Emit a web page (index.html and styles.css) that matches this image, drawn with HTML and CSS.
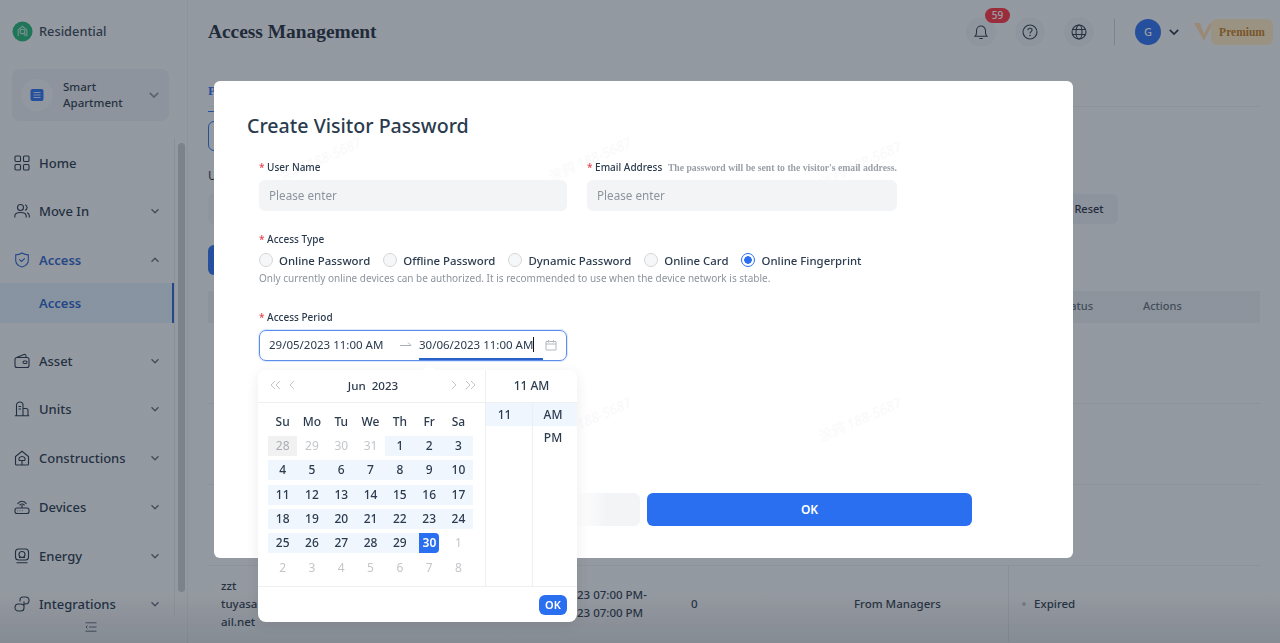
FILE: index.html
```html
<!DOCTYPE html>
<html lang="en">
<head>
    <meta charset="UTF-8">
    <title>Access Management</title>
    <link rel="stylesheet" href="styles.css">
</head>
<body>
    <svg class="sprite" aria-hidden="true">
        <symbol id="chev" viewBox="0 0 10 10"><path d="M1.5 3.2 5 6.8l3.5-3.6" fill="none" stroke="currentColor" stroke-width="1.3"/></symbol>
    </svg>

    <div class="app">
        <aside class="sidebar">
            <div class="brand">
                <svg class="brand-logo" viewBox="0 0 22 22">
                    <circle cx="11" cy="11" r="10.5" fill="#1fb573"/>
                    <path d="M6.5 16V9.5L11 5.5l4.500 4V16" fill="none" stroke="#bfe6d4" stroke-width="1.200"/>
                    <circle cx="11" cy="11" r="2.400" fill="none" stroke="#bfe6d4" stroke-width="1.200"/>
                    <path d="M11 13.400h2.600V16" fill="none" stroke="#bfe6d4" stroke-width="1.200"/>
                </svg>
                <span>Residential</span>
            </div>
            <div class="project">
                <div class="project-icon">
                    <svg viewBox="0 0 14 14" width="14" height="14">
                        <rect x="0.500" y="1" width="13" height="12" rx="2" fill="#2a6ff0"/>
                        <path d="M3.500 4.500h7M3.500 7h7M3.500 9.500h7" stroke="#cfe0fb" stroke-width="1"/>
                    </svg>
                </div>
                <div class="project-name">Smart<br>Apartment</div>
                <svg class="chev"><use href="#chev"/></svg>
            </div>

            <div class="side-scroll">
                <nav class="menu">
                    <a class="menu-item">
                        <svg class="menu-icon" viewBox="0 0 16 16"><rect x="1" y="1" width="5.500" height="5.500" rx="1"/><rect x="9.500" y="1" width="5.500" height="5.500" rx="1"/><rect x="1" y="9.500" width="5.500" height="5.500" rx="1"/><rect x="9.500" y="9.500" width="5.500" height="5.500" rx="1"/></svg>
                        Home
                    </a>
                    <a class="menu-item">
                        <svg class="menu-icon" viewBox="0 0 16 16"><circle cx="6.500" cy="4.500" r="3"/><path d="M.8 14.500v-1.500c0-2.200 2-3.500 5.700-3.500s5.700 1.300 5.700 3.500v1.500M11 1.700c1.400.4 2.100 1.500 2.100 2.800S12.400 6.900 11 7.300M13 9.800c1.500.5 2.300 1.600 2.300 3v1.700"/></svg>
                        Move In
                        <svg class="chev"><use href="#chev"/></svg>
                    </a>
                    <a class="menu-item active">
                        <svg class="menu-icon" viewBox="0 0 16 16"><path d="M8 1c2 1.200 4 1.800 6.300 1.900v5.300c0 3.300-2.600 5.700-6.300 6.800-3.700-1.100-6.300-3.500-6.300-6.800V2.900C4 2.800 6 2.200 8 1z"/><path d="M5.300 7.300 7.500 9.500l3.300-3.200"/></svg>
                        Access
                        <svg class="chev chev-up"><use href="#chev"/></svg>
                    </a>
                    <a class="menu-sub">Access</a>
                    <a class="menu-item">
                        <svg class="menu-icon" viewBox="0 0 16 16"><rect x="1" y="4.500" width="14" height="10" rx="2"/><path d="M2.500 4.500 10 1.500c1-.3 2 .2 2 1.500v1.500"/><rect x="9" y="8" width="4" height="2.500" rx="1.200"/></svg>
                        Asset
                        <svg class="chev"><use href="#chev"/></svg>
                    </a>
                    <a class="menu-item">
                        <svg class="menu-icon" viewBox="0 0 16 16"><path d="M2.500 14.500V4c0-1.800 1.500-3 3.300-3s3.200 1.200 3.200 3v10.500M9 7.500h3c1.200 0 2 .8 2 2v5M.8 14.800h14.400M4.500 5.500h2.600M4.500 8h2.600"/></svg>
                        Units
                        <svg class="chev"><use href="#chev"/></svg>
                    </a>
                    <a class="menu-item">
                        <svg class="menu-icon" viewBox="0 0 16 16"><path d="M1.500 14V6.500L8 1.300l6.500 5.200V14c0 .6-.4 1-1 1h-11c-.6 0-1-.4-1-1z"/><path d="M8 15v-4.500M5.300 10.500c-1.200-1.800.3-4 2.700-4s3.900 2.200 2.700 4z"/></svg>
                        Constructions
                        <svg class="chev"><use href="#chev"/></svg>
                    </a>
                    <a class="menu-item">
                        <svg class="menu-icon" viewBox="0 0 16 16"><rect x="1" y="9" width="14" height="5.500" rx="2"/><path d="M8 9V6M3.500 5C5.800 1.300 10.200 1.300 12.500 5M5.500 6.300C6.800 4.600 9.200 4.600 10.500 6.300M3.500 11.800h.6M5.700 11.800h.6M7.900 11.800h.6"/></svg>
                        Devices
                        <svg class="chev"><use href="#chev"/></svg>
                    </a>
                    <a class="menu-item">
                        <svg class="menu-icon" viewBox="0 0 16 16"><rect x="1.500" y="1" width="13" height="11" rx="3"/><circle cx="8" cy="6.500" r="3"/><path d="M5 9.500h6M2.500 14.700h11"/></svg>
                        Energy
                        <svg class="chev"><use href="#chev"/></svg>
                    </a>
                    <a class="menu-item">
                        <svg class="menu-icon" viewBox="0 0 16 16"><path d="M6 5.500V4c0-1.700 1.300-3 3-3h2.500C13.400 1 15 2.400 15 4.300c0 1.900-1.300 3.700-3.500 3.700H10"/><path d="M10 10.500V12c0 1.700-1.300 3-3 3H4.500C2.600 15 1 13.600 1 11.700 1 9.800 2.300 8 4.500 8H6c2 0 4 .2 4 2.500V5.500"/></svg>
                        Integrations
                        <svg class="chev"><use href="#chev"/></svg>
                    </a>
                </nav>
                <div class="side-track"><div class="side-thumb"></div></div>
            </div>

            <div class="side-foot">
                <svg viewBox="0 0 12 10" width="12" height="10"><path d="M.5 .8h11M4 5h7.500M.5 9.200h11M2.500 3.500 1 5l1.500 1.500" fill="none" stroke="#5f6977" stroke-width="1"/></svg>
            </div>
        </aside>

        <main class="main">
            <header class="topbar">
                <h1>Access Management</h1>
                <div class="top-actions">
                    <div class="round-btn">
                        <svg viewBox="0 0 16 16" width="16" height="16"><path d="M2 12.300h12c-1-1-1.500-2-1.500-3.500V6.500a4.500 4.500 0 0 0-9 0v2.300c0 1.500-.5 2.500-1.500 3.500zM6.300 14.500h3.400" fill="none" stroke="#2d3a4b" stroke-width="1.100"/></svg>
                        <span class="badge">59</span>
                    </div>
                    <div class="round-btn">
                        <svg viewBox="0 0 16 16" width="16" height="16"><circle cx="8" cy="8" r="7" fill="none" stroke="#2d3a4b" stroke-width="1.100"/><path d="M5.900 6.200c0-1.200 1-2 2.100-2s2.100.8 2.100 1.900c0 1.500-2.100 1.700-2.100 3.400" fill="none" stroke="#2d3a4b" stroke-width="1.100"/><circle cx="8" cy="11.500" r=".8" fill="#2d3a4b"/></svg>
                    </div>
                    <div class="round-btn">
                        <svg viewBox="0 0 16 16" width="16" height="16"><g fill="none" stroke="#2d3a4b" stroke-width="1.100"><circle cx="8" cy="8" r="7"/><ellipse cx="8" cy="8" rx="3" ry="7"/><path d="M1.500 5.500h13M1.500 10.500h13"/></g></svg>
                    </div>
                    <div class="top-divider"></div>
                    <div class="avatar">G</div>
                    <svg class="chev chev-dark"><use href="#chev"/></svg>
                    <div class="premium">
                        <svg class="premium-v" viewBox="0 0 20 20" width="20" height="20"><path d="M0 1h6l4 11 3-6 3-5h3L10 19z" fill="#ffd9a8"/></svg>
                        <span class="premium-tag">Premium</span>
                    </div>
                </div>
            </header>

            <div class="content">
                <div class="tabs"><span class="tab">Password</span></div>
                <div class="toolbar"><span class="outline-btn"></span></div>
                <div class="filters">
                    <div class="filter">
                        <label>User</label>
                        <div class="filter-input"></div>
                    </div>
                    <div class="reset-btn">Reset</div>
                </div>
                <div class="primary-btn"></div>
                <div class="table">
                    <div class="table-head">
                        <span class="th-status">Status</span>
                        <span class="th-actions">Actions</span>
                    </div>
                    <div class="table-row"></div>
                    <div class="table-row"></div>
                    <div class="table-row"></div>
                    <div class="table-row">
                        <div class="cell-name">zzt<br>tuyasa<br>ail.net</div>
                        <div class="cell-date">23 07:00 PM-<br>23 07:00 PM</div>
                        <div class="cell-count">0</div>
                        <div class="cell-source">From Managers</div>
                        <div class="cell-status"><i class="dot"></i>Expired</div>
                    </div>
                </div>
            </div>
        </main>
    </div>

    <div class="overlay">
        <div class="modal">
            <span class="mark mark-a">涂鸦 188-5687</span>
            <span class="mark mark-b">涂鸦 188-5687</span>
            <span class="mark mark-c">涂鸦 188-5687</span>
            <span class="mark mark-d">涂鸦 188-5687</span>
            <span class="mark mark-e">涂鸦 188-5687</span>

            <h2>Create Visitor Password</h2>

            <div class="form">
                <div class="form-row">
                    <div class="field field-name">
                        <label><b>*</b> User Name</label>
                        <div class="input">Please enter</div>
                    </div>
                    <div class="field field-mail">
                        <label><b>*</b> Email Address <em>The password will be sent to the visitor's email address.</em></label>
                        <div class="input">Please enter</div>
                    </div>
                </div>

                <div class="field access-type">
                    <label><b>*</b> Access Type</label>
                    <div class="radios">
                        <span class="radio"><i></i>Online Password</span>
                        <span class="radio"><i></i>Offline Password</span>
                        <span class="radio"><i></i>Dynamic Password</span>
                        <span class="radio"><i></i>Online Card</span>
                        <span class="radio on"><i></i>Online Fingerprint</span>
                    </div>
                    <p class="help">Only currently online devices can be authorized. It is recommended to use when the device network is stable.</p>
                </div>

                <div class="field access-period">
                    <label><b>*</b> Access Period</label>
                    <div class="range">
                        <span class="range-start">29/05/2023 11:00 AM</span>
                        <svg class="range-arrow" viewBox="0 0 12 8" width="12" height="8"><path d="M0 4.500h11M8 1.500l3 3" fill="none" stroke="#aab0b8" stroke-width="1"/></svg>
                        <span class="range-end">30/06/2023 11:00 AM</span>
                        <svg class="range-cal" viewBox="0 0 12 12" width="12" height="12"><path d="M1 2.500h10v8.500H1zM1 5h10M3.500 1v2.500M8.500 1v2.500" fill="none" stroke="#b4b9c0" stroke-width="1"/></svg>
                    </div>
                </div>
            </div>

            <div class="modal-actions">
                <button class="btn-cancel"></button>
                <button class="btn-ok">OK</button>
            </div>

            <div class="picker">
                <div class="picker-body">
                    <div class="cal">
                        <div class="cal-head">
                            <svg class="cal-nav" viewBox="0 0 25 10" width="25" height="10"><path d="M5 1 1 5l4 4M10 1 6 5l4 4M24 1l-4 4 4 4"/></svg>
                            <span class="cal-title">Jun&nbsp; 2023</span>
                            <svg class="cal-nav" viewBox="0 0 24 10" width="24" height="10"><path d="m1 1 4 4-4 4M15 1l4 4-4 4M20 1l4 4-4 4"/></svg>
                        </div>
                        <div class="cal-grid">
                            <span class="wk">Su</span><span class="wk">Mo</span><span class="wk">Tu</span><span class="wk">We</span><span class="wk">Th</span><span class="wk">Fr</span><span class="wk">Sa</span>
                            <span class="day off today">28</span><span class="day off">29</span><span class="day off">30</span><span class="day off">31</span><span class="day band">1</span><span class="day band">2</span><span class="day band">3</span>
                            <span class="day band">4</span><span class="day band">5</span><span class="day band">6</span><span class="day band">7</span><span class="day band">8</span><span class="day band">9</span><span class="day band">10</span>
                            <span class="day band">11</span><span class="day band">12</span><span class="day band">13</span><span class="day band">14</span><span class="day band">15</span><span class="day band">16</span><span class="day band">17</span>
                            <span class="day band">18</span><span class="day band">19</span><span class="day band">20</span><span class="day band">21</span><span class="day band">22</span><span class="day band">23</span><span class="day band">24</span>
                            <span class="day band">25</span><span class="day band">26</span><span class="day band">27</span><span class="day band">28</span><span class="day band">29</span><span class="day end"><u>30</u></span><span class="day off">1</span>
                            <span class="day off">2</span><span class="day off">3</span><span class="day off">4</span><span class="day off">5</span><span class="day off">6</span><span class="day off">7</span><span class="day off">8</span>
                        </div>
                    </div>
                    <div class="time">
                        <div class="time-head">11 AM</div>
                        <div class="time-cols">
                            <div class="time-col"><div class="time-cell sel">11</div></div>
                            <div class="time-col"><div class="time-cell sel">AM</div><div class="time-cell">PM</div></div>
                        </div>
                    </div>
                </div>
                <div class="picker-foot"><span class="picker-ok">OK</span></div>
            </div>
        </div>
    </div>
</body>
</html>
```

FILE: styles.css
```css
/* General Styles */
* {
    box-sizing: border-box;
}

html, body {
    height: 100%;
}

body {
    margin: 0;
    overflow: hidden;
    font-family: "Noto Sans", sans-serif;
    color: #1f2d3d;
    background-color: #f5f6f8;
}

.sprite {
    display: none;
}

.app {
    display: flex;
    height: 643px;
}

.chev {
    width: 10px;
    height: 10px;
    margin-left: auto;
    color: #5f6977;
}

.chev-up {
    transform: rotate(180deg);
}

.chev-dark {
    margin-left: 7px;
    width: 12px;
    height: 12px;
    color: #1f2d3d;
}

/* Sidebar */
.sidebar {
    width: 188px;
    flex: none;
    display: flex;
    flex-direction: column;
    border-right: 1px solid #e9ebee;
    height: 643px;
}

.brand {
    display: flex;
    align-items: center;
    gap: 6px;
    height: 22px;
    margin: 20px 0 0 12px;
    font-size: 12.800px;
    font-weight: 500;
    color: #38465a;
}

.brand-logo {
    width: 21px;
    height: 21px;
}

.project {
    display: flex;
    align-items: center;
    width: 157px;
    height: 52px;
    margin: 27px 0 17.400px 12px;
    padding: 0 9px;
    border-radius: 8px;
    background-color: #e9ecf1;
}

.project-icon {
    width: 32px;
    height: 32px;
    display: flex;
    align-items: center;
    justify-content: center;
    border-radius: 50%;
    background-color: #f1f3f6;
}

.project-name {
    margin-left: 10px;
    font-size: 11.500px;
    line-height: 16px;
    font-weight: 500;
    color: #2d3a4b;
}

.project .chev {
    width: 12px;
    height: 12px;
    color: #8a939e;
}

.side-scroll {
    display: flex;
    flex: 1;
    min-height: 0;
}

.menu {
    width: 175px;
    overflow: hidden;
    border-right: 1px solid #e3e6ea;
    flex: none;
}

.menu-item {
    display: flex;
    align-items: center;
    height: 48.700px;
    padding: 0 14px 0 14px;
    font-size: 13px;
    font-weight: 500;
    color: #26364a;
}

.menu-icon {
    width: 16px;
    height: 16px;
    margin-right: 9px;
    flex: none;
    fill: none;
    stroke: #26364a;
    stroke-width: 1.100;
}

.menu-item.active {
    color: #2a62c9;
    font-weight: 600;
}

.menu-item.active .menu-icon {
    stroke: #2a62c9;
}

.menu-sub {
    display: flex;
    align-items: center;
    height: 40px;
    margin: -1px 0 13px;
    padding-left: 39px;
    font-size: 13px;
    font-weight: 600;
    color: #2a62c9;
    background-color: #deebf7;
    border-right: 2px solid #2a62c9;
}

.side-track {
    flex: 1;
    padding: 5px 3px 0 3px;
}

.side-thumb {
    height: 449px;
    width: 7px;
    border-radius: 4px;
    background-color: #c8ccd1;
}

.side-foot {
    height: 28px;
    flex: none;
    display: flex;
    align-items: center;
    padding: 0 0 4px 85px;
}

/* Main */
.main {
    flex: 1;
    min-width: 0;
    height: 643px;
    overflow: hidden;
}

.topbar {
    display: flex;
    align-items: center;
    justify-content: space-between;
    height: 64px;
    padding: 0 7px 0 20px;
}

.topbar h1 {
    margin: 0;
    font-family: "Liberation Serif", serif;
    font-size: 19.400px;
    font-weight: 700;
    color: #1f2d3d;
}

.top-actions {
    display: flex;
    align-items: center;
}

.round-btn {
    position: relative;
    display: flex;
    align-items: center;
    justify-content: center;
    width: 30px;
    height: 30px;
    margin-right: 19px;
    border-radius: 50%;
    background-color: #eceff2;
}

.badge {
    position: absolute;
    left: 19px;
    top: -9px;
    width: 25px;
    height: 15px;
    border-radius: 8px;
    text-align: center;
    font-size: 10px;
    line-height: 15px;
    font-weight: 500;
    color: #fff;
    background-color: #ff3040;
}

.top-divider {
    width: 1px;
    height: 26px;
    margin: 0 20px 0 1px;
    background-color: #c9ced4;
}

.avatar {
    width: 26px;
    height: 26px;
    border-radius: 50%;
    background-color: #2a6ff0;
    color: #fff;
    font-size: 11px;
    font-weight: 500;
    text-align: center;
    line-height: 26px;
}

.premium {
    display: flex;
    align-items: center;
    margin-left: 14px;
}

.premium-v {
    margin-right: -3px;
}

.premium-tag {
    width: 62px;
    height: 26px;
    border-radius: 6px;
    background-color: #ffe9bf;
    color: #c47a20;
    font-family: "Liberation Serif", serif;
    font-size: 11.500px;
    font-weight: 700;
    line-height: 26px;
    text-align: center;
}

.content {
    padding: 0 20px;
}

.tabs {
    height: 43px;
    padding-top: 14px;
    border-bottom: 1px solid #e7e9ec;
}

.tab {
    display: inline-block;
    height: 29px;
    border-bottom: 1px solid #2a6ff0;
    font-family: "Liberation Serif", serif;
    font-size: 13px;
    font-weight: 700;
    color: #2a6ff0;
}

.toolbar {
    padding-top: 14px;
    height: 44px;
}

.outline-btn {
    display: block;
    width: 60px;
    height: 30px;
    border: 1px solid #2a6ff0;
    border-radius: 6px;
}

.filters {
    display: flex;
    justify-content: space-between;
    height: 94px;
    padding-top: 17px;
}

.filter label {
    display: block;
    font-size: 12px;
    line-height: 16px;
}

.filter-input {
    width: 200px;
    height: 32px;
    margin-top: 9px;
    border-radius: 6px;
    background-color: #eceef1;
}

.reset-btn {
    width: 58px;
    height: 30px;
    margin: 26px 142px 0 0;
    border-radius: 6px;
    background-color: #e8ecf0;
    font-size: 11px;
    font-weight: 500;
    line-height: 30px;
    text-align: center;
}

.primary-btn {
    width: 80px;
    height: 30px;
    border-radius: 6px;
    background-color: #2a6ff0;
}

.table {
    margin-top: 16px;
}

.table-head {
    display: flex;
    height: 32px;
    padding-bottom: 3px;
    align-items: center;
    background-color: #e7ebef;
    font-size: 11px;
    font-weight: 500;
    color: #5f6b7a;
}

.th-status {
    margin-left: 852px;
}

.th-actions {
    margin-left: 50px;
}

.table-row {
    display: grid;
    grid-template-columns: 356px 114px 163px 154px 1fr;
    height: 81px;
    padding: 0 0 4px 13px;
    align-items: center;
    border-bottom: 1px solid #e7e9ec;
    font-size: 11.500px;
    line-height: 18px;
    font-weight: 500;
    color: #2d3a4b;
}

.cell-date {
    white-space: nowrap;
}

.cell-status {
    display: flex;
    align-items: center;
    align-self: stretch;
    padding-left: 13px;
    border-left: 1px solid #e3e6ea;
}

.dot {
    width: 4px;
    height: 4px;
    margin-right: 8px;
    border-radius: 50%;
    background-color: #bcc2c9;
}

/* Modal */
.overlay {
    position: fixed;
    inset: 0;
    background: linear-gradient(180deg, rgba(31, 41, 55, 0.45) 92%, rgba(31, 41, 55, 0.52) 100%);
}

.modal {
    position: absolute;
    left: 214px;
    top: 81px;
    width: 859px;
    height: 477px;
    padding: 31px 0 0 33px;
    border-radius: 6px;
    background-color: #fff;
}

.modal h2 {
    margin: 0;
    font-size: 19.600px;
    line-height: 28px;
    font-weight: 500;
    color: #2b3b4e;
}

.mark {
    position: absolute;
    font-family: "Noto Sans", "Noto Sans CJK SC", sans-serif;
    font-size: 14px;
    font-style: italic;
    color: #f9f9fa;
    white-space: nowrap;
    transform: rotate(-24deg);
}

.mark-a { left: 60px; top: 68px; }
.mark-b { left: 330px; top: 68px; }
.mark-c { left: 600px; top: 72px; }
.mark-d { left: 330px; top: 328px; }
.mark-e { left: 600px; top: 328px; }

.form {
    position: relative;
    margin: 20px 0 0 12px;
}

.form-row {
    display: flex;
    gap: 20px;
}

.field label {
    display: block;
    height: 14px;
    font-size: 10px;
    line-height: 14px;
    font-weight: 500;
    color: #2b3b4e;
    white-space: nowrap;
}

.field label b {
    color: #e8424f;
    font-weight: 500;
}

.field label em {
    margin-left: 3px;
    font-family: "Liberation Serif", serif;
    font-size: 9.700px;
    font-style: normal;
    font-weight: 700;
    color: #9aa0a8;
}

.field-name {
    width: 308px;
}

.field-mail {
    width: 310px;
}

.input {
    height: 31px;
    margin-top: 6px;
    padding: 0 10px;
    border-radius: 6px;
    background-color: #f3f4f6;
    font-size: 11.700px;
    line-height: 31px;
    color: #8d949e;
}

.access-type {
    margin-top: 21px;
}

.radios {
    display: flex;
    gap: 13px;
    margin-top: 7px;
}

.radio {
    display: flex;
    align-items: center;
    height: 14px;
    font-size: 11.400px;
    font-weight: 500;
    color: #2b3b4e;
}

.radio i {
    width: 14px;
    height: 14px;
    margin-right: 6px;
    border: 1px solid #d3d6da;
    border-radius: 50%;
    background-color: #f6f7f8;
}

.radio.on i {
    border-color: #2a6ff0;
    background: radial-gradient(circle, #2a6ff0 0 3.500px, #fff 4px);
}

.help {
    margin: 4px 0 0;
    font-size: 10px;
    line-height: 14px;
    color: #8d949e;
}

.access-period {
    margin-top: 25px;
}

.range {
    display: flex;
    align-items: center;
    width: 308px;
    height: 31px;
    margin-top: 6px;
    padding: 0 9px 2px;
    border: 1px solid #5b8def;
    border-radius: 7px;
    box-shadow: 0 0 0 1px #dbe7fb;
    font-size: 11.500px;
    color: #2b3b4e;
    white-space: nowrap;
}

.range-start {
    width: 131px;
}

.range-arrow {
    margin-right: 7px;
}

.range-end {
    position: relative;
    border-right: 1px solid #111;
    line-height: 15px;
}

/* active bar under the end date */
.range-end::after {
    content: "";
    position: absolute;
    left: 0;
    right: -10px;
    bottom: -8px;
    height: 2px;
    background-color: #2a62c9;
}

.range-cal {
    margin-left: auto;
}

.modal-actions {
    display: flex;
    gap: 7px;
    margin: 132px 0 0 67px;
}

.modal-actions button {
    width: 326px;
    height: 33px;
    border: none;
    border-radius: 6px;
    font-family: inherit;
    font-size: 12px;
    font-weight: 600;
}

.modal-actions .btn-ok {
    width: 325px;
    background-color: #2a6ff0;
    color: #fff;
}

.btn-cancel {
    background: linear-gradient(90deg, #fff 80%, #f3f4f6 90%);
}

/* Date picker popup */
.picker {
    position: absolute;
    left: 44px;
    top: 289px;
    width: 319px;
    height: 252px;
    border-radius: 8px;
    background-color: #fff;
    box-shadow: 0 3px 14px rgba(0, 0, 0, 0.08);
}

.picker::before {
    content: "";
    position: absolute;
    left: 167px;
    top: -4px;
    width: 9px;
    height: 9px;
    background-color: #fff;
    transform: rotate(45deg);
}

.picker-body {
    display: flex;
    height: 217px;
    border-bottom: 1px solid #eeeff1;
}

.cal {
    width: 228px;
    flex: none;
    border-right: 1px solid #eeeff1;
}

.cal-head {
    display: flex;
    align-items: center;
    justify-content: space-between;
    height: 33px;
    padding: 0 10px 2px 12px;
    border-bottom: 1px solid #eeeff1;
    font-size: 11.600px;
    font-weight: 500;
    color: #2b3b4e;
}

.cal-nav {
    fill: none;
    stroke: #c3c7cc;
    stroke-width: 1;
}

.cal-grid {
    display: grid;
    grid-template-columns: repeat(7, 29.300px);
    grid-auto-rows: 20px;
    row-gap: 4.400px;
    padding: 8.500px 0 0 10px;
    font-size: 12px;
    font-weight: 500;
    text-align: center;
    line-height: 20px;
    color: #2b3b4e;
}

.day u {
    display: block;
    width: 20px;
    height: 20px;
    margin-left: 5px;
    border-radius: 0 4px 4px 0;
    background-color: #2a6ff0;
    color: #fff;
    font-weight: 600;
    text-decoration: none;
}

.day.off {
    color: #c3c6cb;
    font-weight: 400;
}

.day.today {
    background-color: #f1f1f2;
    color: #a9adb3;
}

.day.band {
    background-color: #eff6fd;
}

.day.end {
    background: linear-gradient(90deg, #eff6fd 50%, transparent 50%);
}

.time {
    flex: 1;
    display: flex;
    flex-direction: column;
}

.time-head {
    height: 33px;
    border-bottom: 1px solid #eeeff1;
    font-size: 12px;
    font-weight: 500;
    line-height: 31px;
    text-align: center;
    color: #2b3b4e;
}

.time-cols {
    flex: 1;
    display: flex;
}

.time-col {
    flex: 1;
}

.time-col:first-child {
    flex: none;
    width: 47px;
    border-right: 1px solid #eeeff1;
}

.time-cell {
    height: 23px;
    padding-right: 4px;
    font-size: 12px;
    font-weight: 500;
    line-height: 23px;
    text-align: center;
    color: #2b3b4e;
}

.time-col:first-child .time-cell {
    padding-right: 9px;
}

.time-cell.sel {
    background-color: #eff6fd;
}

.picker-foot {
    display: flex;
    justify-content: flex-end;
    padding: 8px 10px 0 0;
}

.picker-ok {
    width: 28px;
    height: 20px;
    border-radius: 6px;
    background-color: #2a6ff0;
    color: #fff;
    font-size: 11px;
    font-weight: 600;
    line-height: 20px;
    text-align: center;
}
```
